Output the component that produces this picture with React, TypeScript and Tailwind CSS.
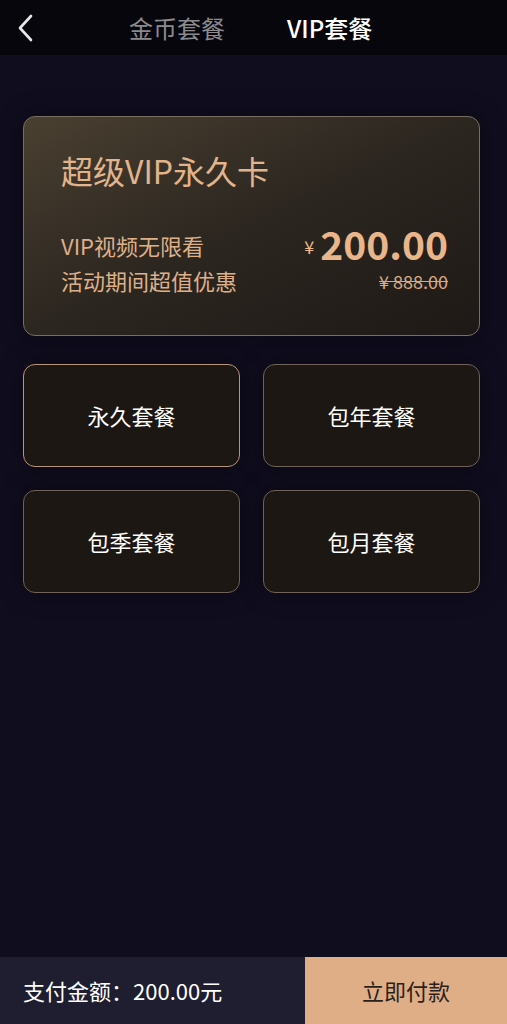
import { useState } from "react";

const plans = ["永久套餐", "包年套餐", "包季套餐", "包月套餐"];

const font = { fontFamily: '"Noto Sans CJK SC", "Noto Sans", sans-serif' };

export default function App() {
  const [tab, setTab] = useState(1);
  const [active, setActive] = useState(0);

  return (
    <div className="flex h-[1024px] w-full flex-col bg-[#100d1f]" style={font}>
      {/* header */}
      <div className="flex h-[55px] shrink-0 items-center bg-[#07060c]">
        <button className="ml-[13px] flex h-[40px] w-[24px] items-center justify-center text-[#e6e6e6]">
          <svg width="18" height="30" viewBox="0 0 18 30" fill="none">
            <path d="M15 3 4 15l11 12" stroke="currentColor" strokeWidth="2.6" strokeLinecap="round" strokeLinejoin="round" />
          </svg>
        </button>
        <div className="ml-[92px] flex gap-[62px]">
          {["金币套餐", "VIP套餐"].map((t, i) => (
            <div
              key={t}
              onClick={() => setTab(i)}
              className={`cursor-pointer text-[24px] leading-none ${
                tab === i ? "font-medium text-white" : "text-[#8b8b8f]"
              }`}
            >
              {t}
            </div>
          ))}
        </div>
      </div>

      {/* content */}
      <div className="flex-1 pl-[23px] pr-[27px] pt-[61px]">
        <div className="h-[220px] rounded-[12px] border border-[#7a6e62] bg-gradient-to-br from-[#4a4031] via-[#2c2620] to-[#1e1916] pl-[37px] pr-[31px] pt-[30px] shadow-[0_0_24px_rgba(0,0,0,0.45)]">
          <div className="text-[32px] leading-[46px] text-[#e2b48c]">超级VIP永久卡</div>
          <div className="mt-[35px] flex items-start justify-between">
            <div className="text-[22px] leading-[35px] text-[#deb08a]">
              <div>VIP视频无限看</div>
              <div>活动期间超值优惠</div>
            </div>
            <div className="flex flex-col items-end">
              <div className="-mt-[7px] flex h-[44px] items-center text-[#e9b58b]">
                <span className="mr-[6px] mt-[6px] text-[18px] leading-none">¥</span>
                <span className="text-[39px] font-bold leading-none">200.00</span>
              </div>
              <div className="mt-[6px] text-[18px] leading-[20px] text-[#d9aa86] line-through">¥ 888.00</div>
            </div>
          </div>
        </div>

        <div className="mt-[28px] grid grid-cols-2 gap-[23px]">
          {plans.map((p, i) => (
            <div
              key={p}
              onClick={() => setActive(i)}
              className={`flex h-[103px] cursor-pointer items-center justify-center rounded-[12px] border bg-[#1d1714] text-[22px] text-white shadow-[0_0_24px_rgba(0,0,0,0.4)] ${
                active === i ? "border-[#b8957a]" : "border-[#6e6259]"
              }`}
            >
              {p}
            </div>
          ))}
        </div>
      </div>

      {/* bottom bar */}
      <div className="flex h-[67px] shrink-0">
        <div className="flex w-[305px] items-center bg-[#1f1e31] pl-[23px] text-[22px] text-white">
          支付金额：200.00元
        </div>
        <button className="flex flex-1 items-center justify-center bg-[#dfae87] text-[22px] text-[#2b211c]">
          立即付款
        </button>
      </div>
    </div>
  );
}
